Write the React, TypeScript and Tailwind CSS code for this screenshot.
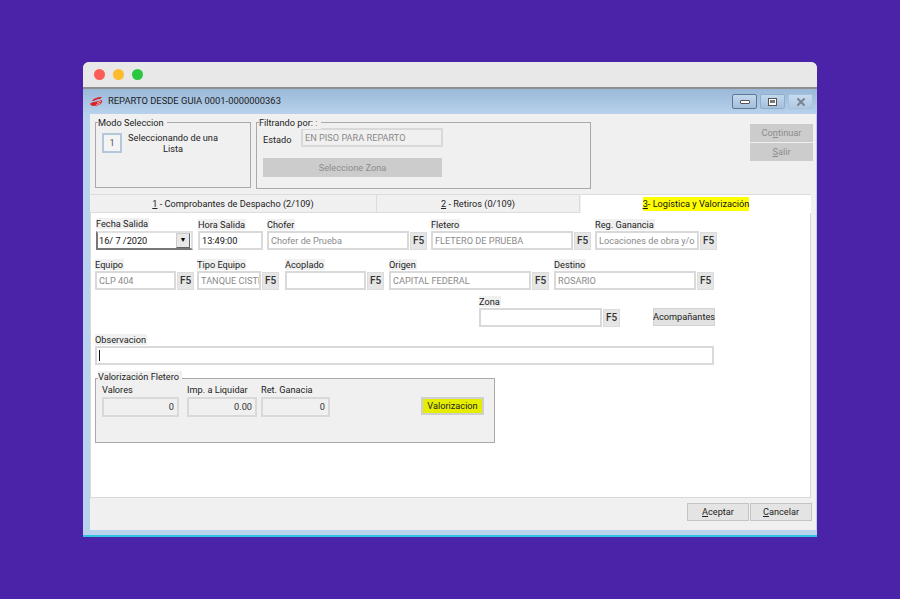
import { X } from "lucide-react";
import type { ReactNode } from "react";

function F5() {
  return (
    <div className="ml-px flex h-[18px] w-[17px] shrink-0 items-center justify-center border border-[#dcdcdc] bg-[#e6e6e6] text-[10px] font-medium text-[#333]">
      F5
    </div>
  );
}

function Input({ value, width, dark }: { value?: ReactNode; width: string; dark?: boolean }) {
  return (
    <div
      className={`flex h-[19px] items-center overflow-hidden whitespace-nowrap border-2 border-[#d9d9d9] bg-white pl-[2px] ${width} ${dark ? "text-[#111]" : "text-[#8a8a8a]"}`}
    >
      {value}
    </div>
  );
}

function Field({
  label,
  value,
  width,
  f5,
  className,
  dark,
}: {
  label: string;
  value?: ReactNode;
  width: string;
  f5?: boolean;
  className?: string;
  dark?: boolean;
}) {
  return (
    <div className={className}>
      <div className="h-[12px] leading-[12px]">
        <span className="bg-[#f0f0f0] pr-px">{label}</span>
      </div>
      <div className="flex items-center">
        <Input value={value} width={width} dark={dark} />
        {f5 && <F5 />}
      </div>
    </div>
  );
}

function Group({
  legend,
  legendTop = "top-[-6px]",
  className,
  children,
}: {
  legend: ReactNode;
  legendTop?: string;
  className: string;
  children: ReactNode;
}) {
  return (
    <div className={`relative shrink-0 border border-[#a9a9a9] ${className}`}>
      <span className={`absolute left-[2px] bg-[#f0f0f0] pr-[3px] leading-[12px] ${legendTop}`}>{legend}</span>
      {children}
    </div>
  );
}

function SideButton({ children }: { children: ReactNode }) {
  return (
    <div className="flex h-[18px] w-[63px] items-center justify-center bg-[#cccccc] text-[#8c8c8c]">{children}</div>
  );
}

function Amount({ value, width }: { value: string; width: string }) {
  return (
    <div className={`flex h-[20px] items-center justify-end border-2 border-[#d9d9d9] bg-[#f0f0f0] pr-[3px] text-[#333] ${width}`}>
      {value}
    </div>
  );
}

export default function App() {
  return (
    <div className="h-[599px] w-[900px] overflow-hidden bg-[#4a23a8] pl-[83px] pt-[62px] font-['Roboto',sans-serif] text-[9.2px] text-[#222]">
      <div className="flex h-[475px] w-[734px] flex-col overflow-hidden rounded-t-[6px] border-b-2 border-[#2fc4e0] bg-[#b9d3ee]">
        {/* mac bar */}
        <div className="flex h-[27px] shrink-0 items-center gap-[8px] border-b-2 border-[#8f8f8f] bg-[#e8e8e8] pb-[1px] pl-[11px]">
          <span className="h-[11px] w-[11px] rounded-full bg-[#fc5b57]" />
          <span className="h-[11px] w-[11px] rounded-full bg-[#fdbb2e]" />
          <span className="h-[11px] w-[11px] rounded-full bg-[#2ac840]" />
        </div>

        {/* window title */}
        <div className="flex h-[25px] shrink-0 items-center bg-gradient-to-b from-[#9ab8d8] to-[#b8d2ec] pl-[7px] pr-[4px]">
          <svg width="13" height="10" viewBox="0 0 13 10" className="mr-[5px]">
            <path d="M2 4 C3 2 7 0 12 0 L10 2 C7 2 5 3 4 4 Z" fill="#d8232a" />
            <path d="M0 7 C2 4 8 5 12 3 C13 6 9 9 3 9 C2 9 1 8 0 7 Z" fill="#d8232a" />
            <path d="M7 5.5 L11 4.5 M6.5 7.5 L10 6.5" stroke="#f5d0d0" strokeWidth="0.8" />
          </svg>
          <span className="text-[9.4px] text-[#1c1c1c]">REPARTO DESDE GUIA 0001-0000000363</span>
          <div className="ml-auto flex gap-[3px]">
            <div className="flex h-[15px] w-[25px] items-center justify-center rounded-[2px] border border-[#5d7896] bg-gradient-to-b from-[#c3d7ec] to-[#a4bfdc]">
              <span className="h-[4px] w-[10px] rounded-[1px] border border-[#555] bg-white" />
            </div>
            <div className="flex h-[15px] w-[25px] items-center justify-center rounded-[2px] border border-[#8fadcc] bg-gradient-to-b from-[#c3d7ec] to-[#a4bfdc]">
              <span className="flex h-[8px] w-[9px] items-center justify-center border border-[#555] bg-white">
                <span className="h-[3px] w-[5px] bg-[#777]" />
              </span>
            </div>
            <div className="flex h-[15px] w-[25px] items-center justify-center rounded-[2px] border border-[#a9c3de] bg-gradient-to-b from-[#c8dbef] to-[#b0c9e3]">
              <X size={12} strokeWidth={4} className="text-[#7a8490]" />
            </div>
          </div>
        </div>

        {/* form body */}
        <div className="ml-[7px] mr-px flex min-h-0 flex-1 flex-col bg-[#f0f0f0]">
          {/* top section */}
          <div className="flex h-[80px] shrink-0 pl-[5px] pt-[8px]">
            <Group legend="Modo Seleccion" className="h-[66px] w-[156px]">
              <div className="flex pl-[6px] pt-[10px]">
                <div className="flex h-[20px] w-[20px] items-center justify-center border-2 border-[#b4c6da] bg-[#f4f4f4] text-[#555]">
                  1
                </div>
                <div className="ml-[6px] mt-[-1px] w-[90px] text-center leading-[11px] text-[#222]">
                  Seleccionando de una Lista
                </div>
              </div>
            </Group>
            <Group
              legend={
                <>
                  Filtrando por: <span className="text-[#c05a20]">:</span>
                </>
              }
              className="ml-[5px] h-[67px] w-[335px]"
            >
              <div className="flex items-center pl-[6px] pt-[5px]">
                <span className="mt-[5px] w-[38px]">Estado</span>
                <div className="flex h-[19px] w-[142px] items-center border-2 border-[#d9d9d9] bg-[#f0f0f0] pl-[2px] text-[#8a8a8a]">
                  EN PISO PARA REPARTO
                </div>
              </div>
              <div className="ml-[6px] mt-[11px] flex h-[19px] w-[179px] items-center justify-center bg-[#cccccc] text-[#8c8c8c]">
                Seleccione Zona
              </div>
            </Group>
            <div className="ml-[159px] mt-[2px] flex shrink-0 flex-col gap-px">
              <SideButton>
                <span>
                  Co<u>n</u>tinuar
                </span>
              </SideButton>
              <SideButton>
                <span>
                  <u>S</u>alir
                </span>
              </SideButton>
            </div>
          </div>

          {/* tabs */}
          <div className="flex h-[19px] w-[721px] shrink-0 text-[#222]">
            <div className="flex w-[286px] items-center justify-center border-y border-[#dcdcdc] bg-[#f0f0f0]">
              <span>
                <u>1</u> - Comprobantes de Despacho (2/109)
              </span>
            </div>
            <div className="flex w-[204px] items-center justify-center border border-[#dcdcdc] bg-[#f0f0f0]">
              <span>
                <u>2</u> - Retiros (0/109)
              </span>
            </div>
            <div className="ml-px flex w-[230px] items-center justify-center border-t border-[#dcdcdc] bg-white">
              <span className="bg-[#ffff00] text-[#111]">
                <u>3</u>- Logística y Valorización
              </span>
            </div>
          </div>

          {/* tab panel */}
          <div className="flex h-[285px] w-[721px] shrink-0 flex-col border-x border-b border-[#d9d9d9] bg-white pl-[4px] pt-[5px]">
            <div className="flex">
              <div className="ml-px">
                <div className="h-[13px] leading-[12px]">
                  <span className="bg-[#f0f0f0] pr-px">Fecha Salida</span>
                </div>
                <div className="flex h-[19px] w-[97px] items-center justify-between border-2 border-b-[#777] border-l-[#777] border-r-[#e0e0e0] border-t-[#e0e0e0] bg-white pl-[1px] pr-px text-[#111]">
                  16/ 7 /2020
                  <span className="flex h-[15px] w-[14px] items-center justify-center border border-b-[#666] border-l-[#ccc] border-r-[#666] border-t-[#ccc] bg-[#e8e8e8] text-[7px] text-black">
                    ▼
                  </span>
                </div>
              </div>
              <Field className="ml-[5px] mt-px" label="Hora Salida" value="13:49:00" width="w-[65px]" dark />
              <Field className="ml-[4px] mt-px" label="Chofer" value="Chofer de Prueba" width="w-[142px]" f5 />
              <Field className="ml-[4px] mt-px" label="Fletero" value="FLETERO DE PRUEBA" width="w-[142px]" f5 />
              <Field className="ml-[4px] mt-px" label="Reg. Ganancia" value="Locaciones de obra y/o s" width="w-[104px]" f5 />
            </div>

            <div className="mt-[9px] flex">
              <Field label="Equipo" value="CLP 404" width="w-[81px]" f5 />
              <Field className="ml-[3px]" label="Tipo Equipo" value="TANQUE CISTI" width="w-[64px]" f5 />
              <Field className="ml-[6px]" label="Acoplado" width="w-[81px]" f5 />
              <Field className="ml-[5px]" label="Origen" value="CAPITAL FEDERAL" width="w-[142px]" f5 />
              <Field className="ml-[5px]" label="Destino" value="ROSARIO" width="w-[142px]" f5 />
            </div>

            <div className="mt-[6px] flex items-end">
              <Field className="ml-[384px]" label="Zona" width="w-[123px]" f5 />
              <div className="mb-[1px] ml-[33px] flex h-[18px] w-[62px] items-center justify-center border border-[#d4d4d4] bg-[#e2e2e2] text-[#222]">
                Acompañantes
              </div>
            </div>

            <div className="mt-[7px]">
              <Field label="Observacion" width="w-[619px]" value={<span className="h-[11px] w-px bg-[#111]" />} />
            </div>

            <Group
              legend="Valorización Fletero"
              legendTop="top-[-8px]"
              className="mt-[13px] h-[65px] w-[400px] bg-[#f0f0f0]"
            >
              <div className="flex pl-[6px] pt-[5px]">
                <div>
                  <div className="h-[13px] leading-[12px]">Valores</div>
                  <Amount value="0" width="w-[77px]" />
                </div>
                <div className="ml-[8px]">
                  <div className="h-[13px] leading-[12px]">Imp. a Liquidar</div>
                  <Amount value="0.00" width="w-[70px]" />
                </div>
                <div className="ml-[4px]">
                  <div className="h-[13px] leading-[12px]">Ret. Ganacia</div>
                  <Amount value="0" width="w-[69px]" />
                </div>
                <div className="ml-[91px] mt-[13px] flex h-[18px] w-[63px] items-center justify-center border-2 border-[#cfcfcf] bg-[#e6ee00]">
                  Valorizacion
                </div>
              </div>
            </Group>
          </div>

          {/* footer */}
          <div className="flex justify-end gap-px pr-[4px] pt-[5px]">
            <div className="flex h-[18px] w-[62px] items-center justify-center border border-[#c4c4c4] bg-[#e4e4e4]">
              <span>
                <u>A</u>ceptar
              </span>
            </div>
            <div className="flex h-[18px] w-[62px] items-center justify-center border border-[#c4c4c4] bg-[#e4e4e4]">
              <span>
                <u>C</u>ancelar
              </span>
            </div>
          </div>
        </div>
        <div className="h-[5px] shrink-0" />
      </div>
    </div>
  );
}
